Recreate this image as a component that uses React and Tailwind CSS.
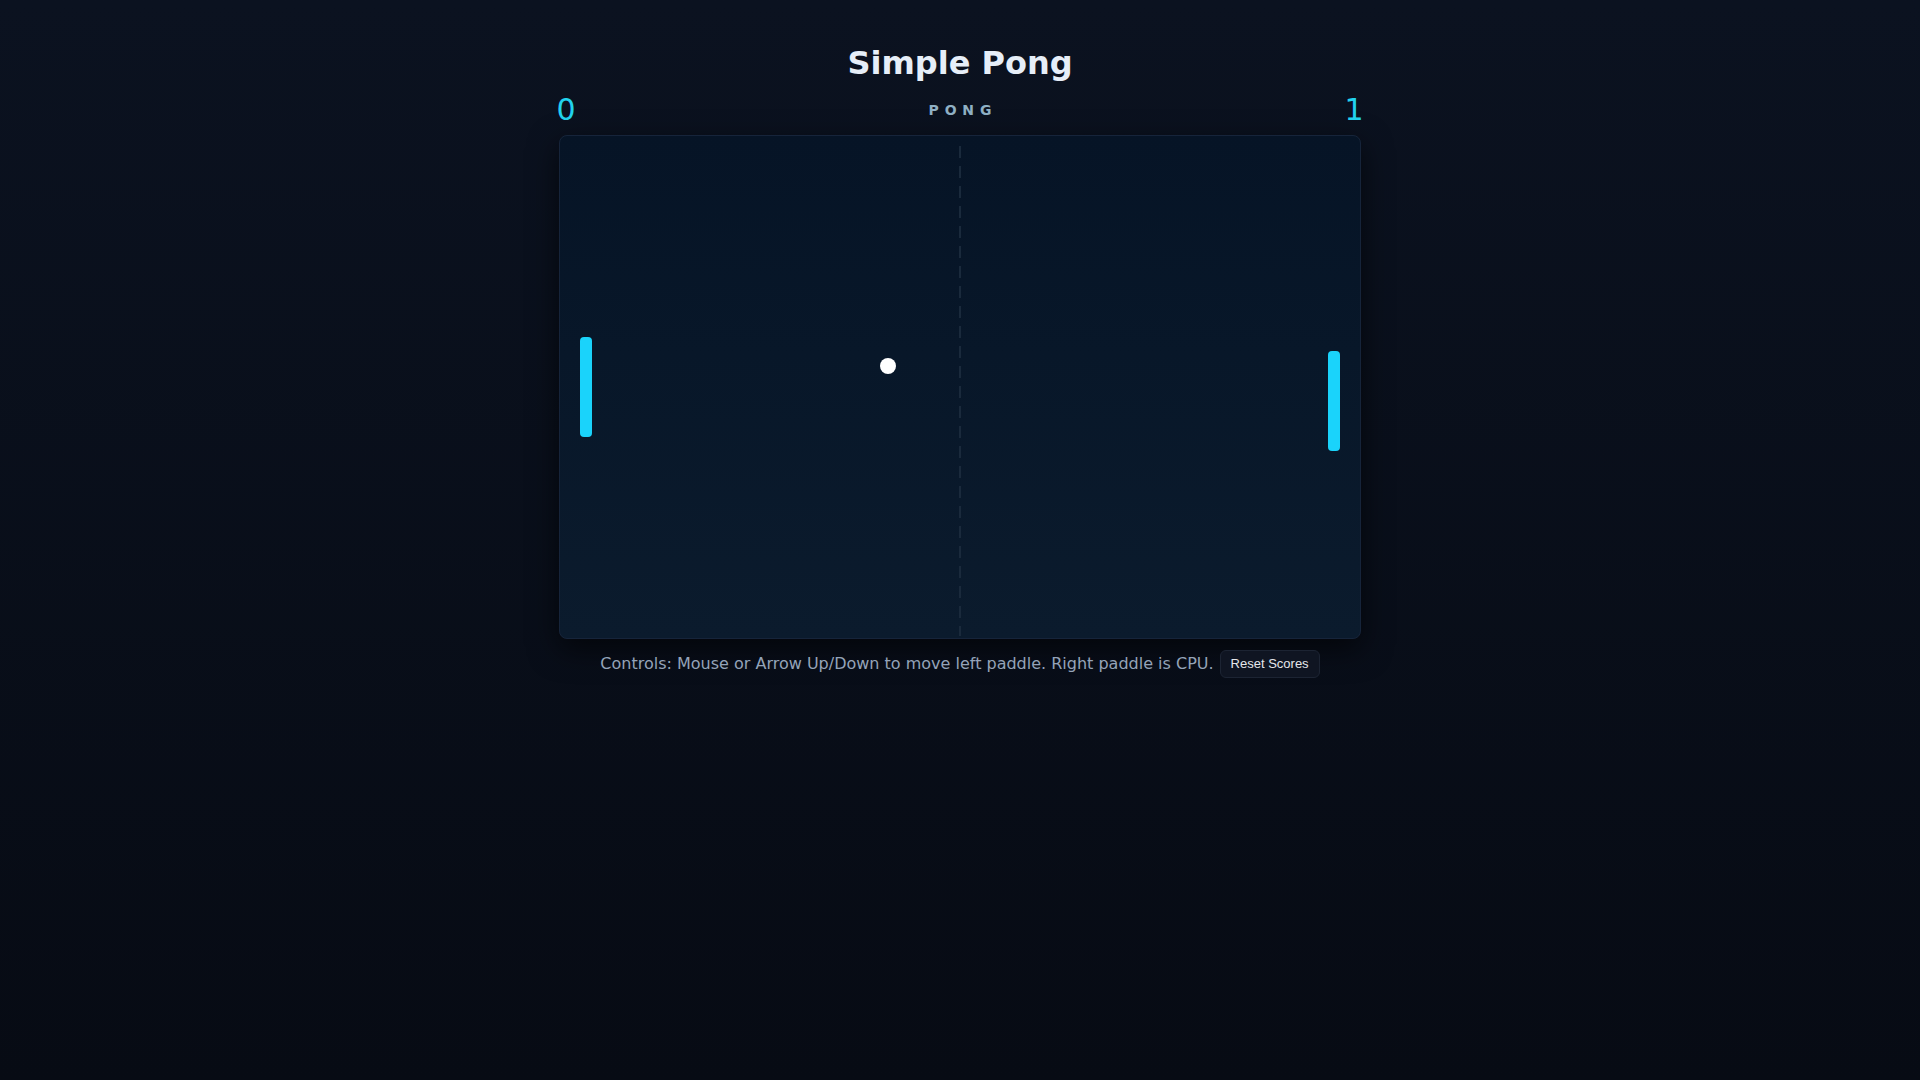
import React from 'react';

// fixed snapshot of the game state
const W = 800;
const H = 500;
const left = { x: 20, y: 201, w: 12, h: 100 };
const right = { x: 768, y: 215, w: 12, h: 100 };
const ball = { x: 328, y: 230, r: 8 };

function Court() {
  return (
    <svg width={W} height={H} viewBox={`0 0 ${W} ${H}`} className="block">
      <line
        x1={400}
        y1={10}
        x2={400}
        y2={H}
        stroke="#1a2a3c"
        strokeWidth={2}
        strokeDasharray="12 8"
      />
      <rect x={left.x} y={left.y} width={left.w} height={left.h} rx={4} fill="#1ad3fb" />
      <rect x={right.x} y={right.y} width={right.w} height={right.h} rx={4} fill="#1ad3fb" />
      <circle cx={ball.x} cy={ball.y} r={ball.r} fill="#ffffff" />
    </svg>
  );
}

export default function App() {
  return (
    <div className="min-h-screen bg-gradient-to-b from-[#0b1220] to-[#070b14] font-['DejaVu_Sans',sans-serif] flex flex-col items-center pt-[44px]">
      <h1 className="text-[32px] leading-[38px] font-bold text-[#e6eef8]">Simple Pong</h1>

      <div className="mt-[10px] w-[807px] h-[36px] flex items-center justify-between">
        <span className="text-[30px] leading-none text-[#22d3ee]">0</span>
        <span className="text-[14px] font-bold tracking-[5.8px] text-[#8fb0c4] pl-[5.8px]">PONG</span>
        <span className="text-[30px] leading-none text-[#22d3ee]">1</span>
      </div>

      <div className="mt-[7px] pb-[2px] border border-[#16243a] rounded-lg overflow-hidden bg-gradient-to-b from-[#061426] to-[#0b1b2d] shadow-[0_10px_30px_rgba(0,0,0,0.6)]">
        <Court />
      </div>

      <div className="mt-[11px] flex items-center gap-[6px]">
        <span className="text-[16px] text-[#94a3b8]">
          Controls: Mouse or Arrow Up/Down to move left paddle. Right paddle is CPU.
        </span>
        <button className="h-[28px] px-[10px] rounded-md border border-[#1c2433] bg-[#0f1522] text-[#e5e7eb] font-['Liberation_Sans',Arial,sans-serif] text-[13px]">
          Reset Scores
        </button>
      </div>
    </div>
  );
}
